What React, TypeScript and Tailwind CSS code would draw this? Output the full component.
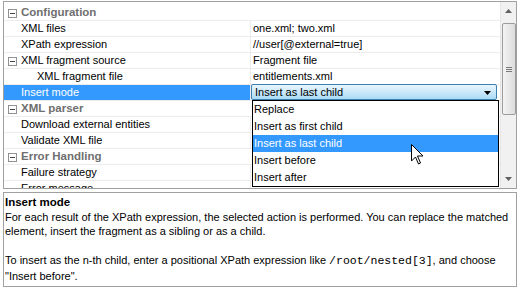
import React from "react";

interface Row {
  label: string;
  value?: string;
  kind: "category" | "prop" | "expand" | "child" | "selected";
}

const rows: Row[] = [
  { label: "Configuration", kind: "category" },
  { label: "XML files", value: "one.xml; two.xml", kind: "prop" },
  { label: "XPath expression", value: "//user[@external=true]", kind: "prop" },
  { label: "XML fragment source", value: "Fragment file", kind: "expand" },
  { label: "XML fragment file", value: "entitlements.xml", kind: "child" },
  { label: "Insert mode", kind: "selected" },
  { label: "XML parser", kind: "category" },
  { label: "Download external entities", kind: "prop" },
  { label: "Validate XML file", kind: "prop" },
  { label: "Error Handling", kind: "category" },
  { label: "Failure strategy", kind: "prop" },
  { label: "Error message", kind: "prop" },
];

const options = [
  "Replace",
  "Insert as first child",
  "Insert as last child",
  "Insert before",
  "Insert after",
];

const MinusBox = () => (
  <span className="absolute left-[4px] top-[4px] w-[9px] h-[9px] border border-[#919191] bg-white flex items-center justify-center">
    <span className="w-[5px] h-[1px] bg-[#444]" />
  </span>
);

const GridRow = ({ row }: { row: Row }) => {
  if (row.kind === "category") {
    return (
      <div className="relative h-[16px] border-b border-[#ececec] flex items-center">
        <MinusBox />
        <span className="pl-[17px] font-bold text-[#6f6f6f] text-[11.5px]">
          {row.label}
        </span>
      </div>
    );
  }
  return (
    <div className="relative h-[16px] border-b border-[#ececec] flex">
      {row.kind === "expand" && <MinusBox />}
      <div
        className={
          "w-[247px] flex items-center border-r border-[#ececec] " +
          (row.kind === "child" ? "pl-[33px] " : "pl-[17px] ") +
          (row.kind === "selected" ? "bg-[#3399ff] text-white" : "text-black")
        }
      >
        {row.label}
      </div>
      <div className="flex-1 flex items-center pl-[2px]">
        {row.kind === "selected" ? (
          <div className="-ml-[2px] -mt-[1px] w-[246px] h-[16px] border border-[#3c7fb1] rounded-[2px] bg-gradient-to-b from-[#eaf6fd] to-[#a9dbf6] flex items-center pl-[3px] relative">
            <span>Insert as last child</span>
            <svg
              className="absolute right-[5px] top-[6px]"
              width="7"
              height="4"
              viewBox="0 0 7 4"
            >
              <path d="M0 0H7L3.5 4Z" fill="#000" />
            </svg>
          </div>
        ) : (
          row.value
        )}
      </div>
    </div>
  );
};

const Cursor = () => (
  <svg
    className="absolute left-[411px] top-[144px]"
    width="13"
    height="21"
    viewBox="0 0 13 21"
  >
    <path
      d="M0.5 0.5V17L4.5 13L7.5 20L9.5 19L6.5 12H12Z"
      fill="#fff"
      stroke="#000"
      strokeWidth="1"
      strokeLinejoin="miter"
    />
  </svg>
);

export default function App() {
  return (
    <div className="relative w-[522px] h-[290px] bg-white text-[11px] leading-none font-['Liberation_Sans',Arial,sans-serif] overflow-hidden">
      <div className="pt-[1px] px-[3px]">
        <div className="h-[188px] w-[514px] border border-[#a0a0a0] flex overflow-hidden">
          <div className="relative flex-1 pt-[3px] overflow-hidden">
            {rows.map((r) => (
              <GridRow key={r.label} row={r} />
            ))}
            <div className="absolute left-[248px] top-[98px] w-[247px] h-[87px] border border-black bg-white">
              {options.map((o, i) => (
                <div
                  key={o}
                  className={
                    "h-[17px] flex items-center pl-[1px] " +
                    (i === 2 ? "bg-[#3399ff] text-white" : "text-black")
                  }
                >
                  {o}
                </div>
              ))}
            </div>
          </div>
          <div className="w-[16px] bg-[#f1f1f1] flex flex-col items-center border-l border-[#e6e6e6]">
            <div className="h-[18px] w-full flex items-center justify-center">
              <svg width="7" height="4" viewBox="0 0 7 4">
                <path d="M3.5 0L7 4H0Z" fill="#606060" />
              </svg>
            </div>
            <div className="mt-[3px] w-[14px] h-[92px] rounded-[2px] border border-[#9c9c9c] bg-gradient-to-r from-[#f4f4f4] to-[#dcdcdc] flex flex-col items-center justify-center gap-[1px]">
              <span className="w-[6px] h-[1px] bg-[#7a7a7a]" />
              <span className="w-[6px] h-[1px] bg-[#7a7a7a]" />
              <span className="w-[6px] h-[1px] bg-[#7a7a7a]" />
            </div>
            <div className="flex-1" />
            <div className="h-[18px] w-full flex items-center justify-center">
              <svg width="7" height="4" viewBox="0 0 7 4">
                <path d="M0 0H7L3.5 4Z" fill="#606060" />
              </svg>
            </div>
          </div>
        </div>
        <div className="mt-[3px] h-[95px] w-[514px] border border-[#a0a0a0] px-[1px] pt-[2px] leading-[14.5px] text-black">
          <div className="font-bold text-[11.5px]">Insert mode</div>
          <div>
            For each result of the XPath expression, the selected action is
            performed. You can replace the matched element, insert the fragment
            as a sibling or as a child.
          </div>
          <div className="h-[14.5px]" />
          <div>
            To insert as the n-th child, enter a positional XPath expression
            like{" "}
            <span className="font-['Liberation_Mono',monospace] text-[11.5px]">
              /root/nested[3]
            </span>
            , and choose "Insert before".
          </div>
        </div>
      </div>
      <Cursor />
    </div>
  );
}
